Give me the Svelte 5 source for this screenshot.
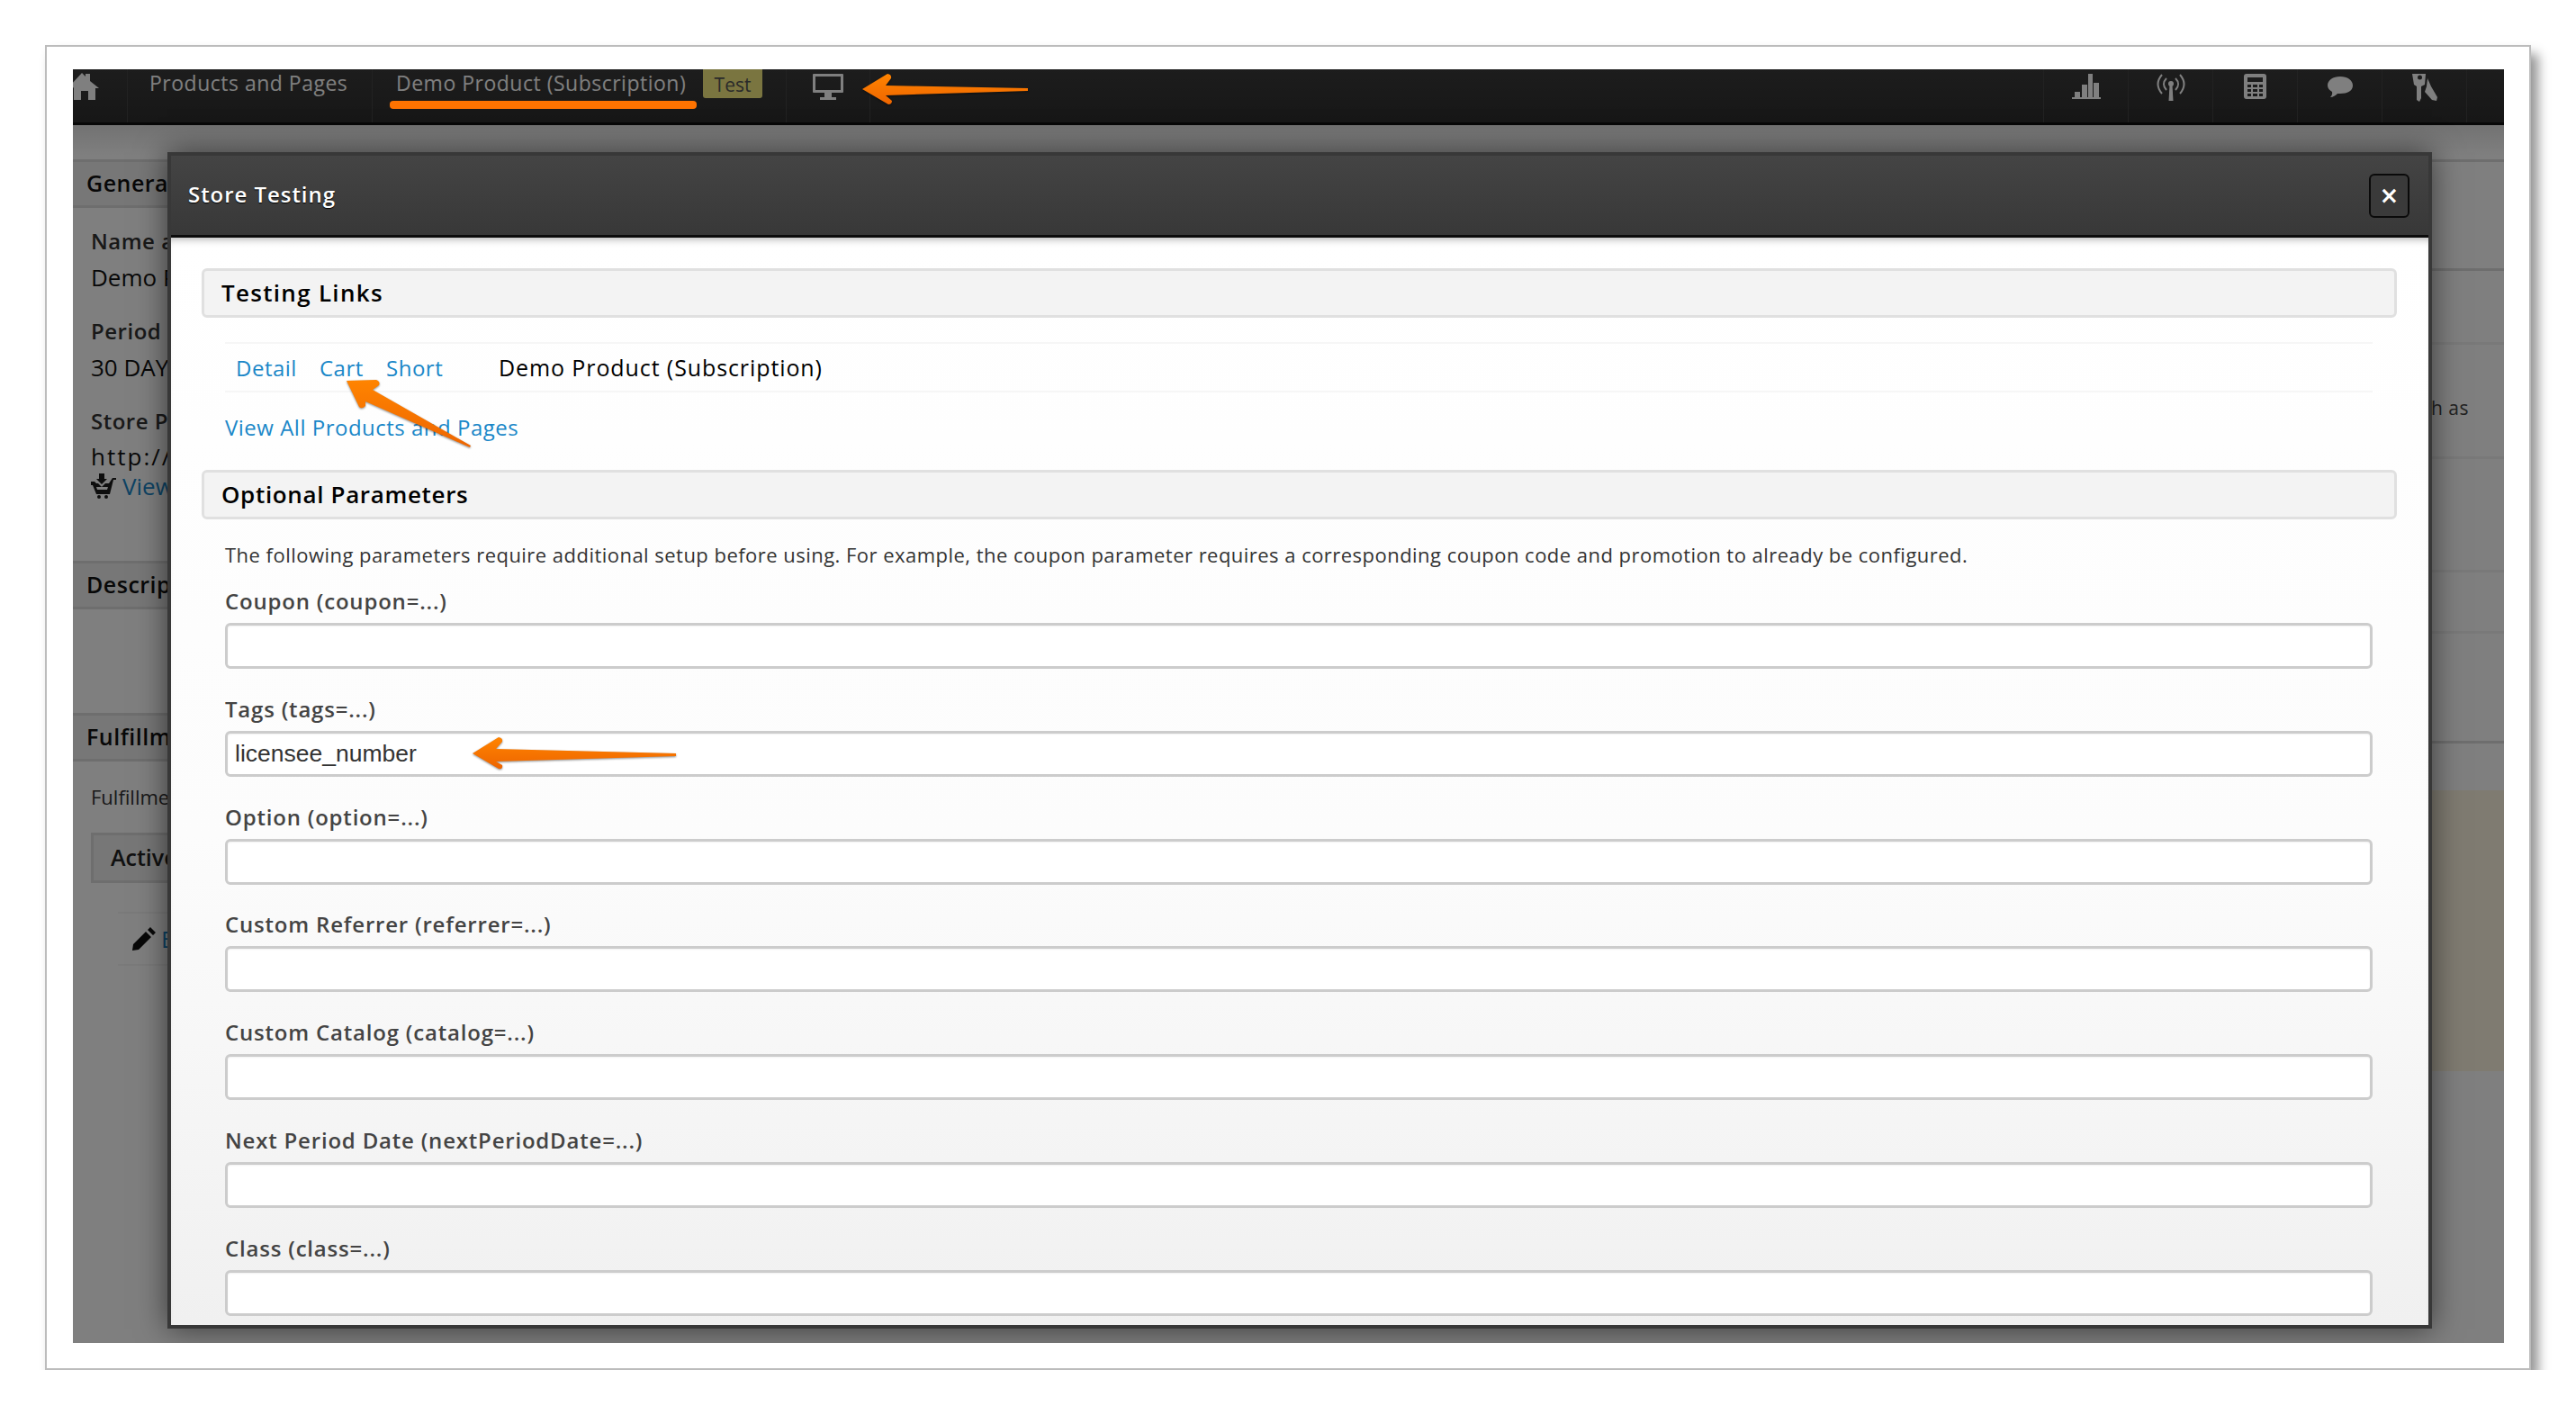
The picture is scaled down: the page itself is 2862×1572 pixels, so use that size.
<script>
	const fields = [
		{ label: 'Coupon (coupon=...)', value: '' },
		{ label: 'Tags (tags=...)', value: 'licensee_number' },
		{ label: 'Option (option=...)', value: '' },
		{ label: 'Custom Referrer (referrer=...)', value: '' },
		{ label: 'Custom Catalog (catalog=...)', value: '' },
		{ label: 'Next Period Date (nextPeriodDate=...)', value: '' },
		{ label: 'Class (class=...)', value: '' }
	];
</script>

<div class="frame">
	<div class="shot">
		<nav class="nav">
			<div class="home">
				<svg width="30" height="32" viewBox="0 0 30 32"><path d="M-2 14 L10 1 L14 5 L14 2 L19 2 L19 10 L29 18 L25 18 L25 31 L17 31 L17 21 L9 21 L9 31 L1 31 L1 18 Z" fill="#fff" /></svg>
			</div>
			<a class="crumb first">Products and Pages</a>
			<a class="crumb second">Demo Product (Subscription)</a>
			<span class="badge">Test</span>
			<div class="cell monitor">
				<svg width="34" height="30" viewBox="0 0 34 30"><path fill-rule="evenodd" d="M1 0 H33 a1 1 0 0 1 1 1 V20 a1 1 0 0 1 -1 1 H21 V26 H26 V29 H8 V26 H13 V21 H1 a1 1 0 0 1 -1 -1 V1 a1 1 0 0 1 1 -1 Z M3 3 V18 H31 V3 Z" fill="#fff" /></svg>
			</div>
			<div class="tools">
				<div class="cell">
					<svg width="32" height="28" viewBox="0 0 32 28"><path d="M0 26 H3 V20 H9 V26 H11 V12 H17 V26 H18 V0 H23 V26 H24 V10 H30 V26 H32 V28 H0 Z" fill="#fff" /></svg>
				</div>
				<div class="cell">
					<svg width="32" height="30" viewBox="0 0 32 30" fill="none" stroke="#fff" stroke-width="2"><path d="M6 1 C0 8 0 15 6 22 M26 1 C32 8 32 15 26 22 M11 5 C7 9 7 14 11 18 M21 5 C25 9 25 14 21 18" /><circle cx="16" cy="11" r="3" fill="#fff" stroke="none" /><path d="M14.5 13 H17.5 L18.5 30 H13.5 Z" fill="#fff" stroke="none" /></svg>
				</div>
				<div class="cell">
					<svg width="25" height="28" viewBox="0 0 25 28"><path fill-rule="evenodd" d="M3 0 H22 a3 3 0 0 1 3 3 V25 a3 3 0 0 1 -3 3 H3 a3 3 0 0 1 -3 -3 V3 a3 3 0 0 1 3 -3 Z M4 4 V9 H21 V4 Z M4 12 V15 H8 V12 Z M10 12 V15 H15 V12 Z M17 12 V15 H21 V12 Z M4 17 V20 H8 V17 Z M10 17 V20 H15 V17 Z M17 17 V20 H21 V17 Z M4 22 V25 H8 V22 Z M10 22 V25 H15 V22 Z M17 22 V25 H21 V22 Z" fill="#fff" /></svg>
				</div>
				<div class="cell chat">
					<svg width="28" height="24" viewBox="0 0 28 24"><path d="M14 0 C22 0 28 4 28 10 C28 16 22 19 14 19 L11 19 C9 21 6 23 3 23 C5 21 5.500 19 5 17 C2 15 0 13 0 10 C0 4 6 0 14 0 Z" fill="#fff" /></svg>
				</div>
				<div class="cell">
					<svg width="28" height="31" viewBox="0 0 28 31"><path fill-rule="evenodd" d="M0 0 H15 L14 12 L10 14 V27 L8 31 L5 29 V14 L2 12 Z M6 4 a2.500 2.500 0 1 0 5 0 a2.500 2.500 0 1 0 -5 0 Z" fill="#fff" /><path d="M17 5 L21 14 L28 26 L27 30 L22 29 L14 20 L16 14 Z" fill="#fff" /></svg>
				</div>
			</div>
		</nav>

		<div class="page">
			<div class="left">
				<h3 class="bar">General Information</h3>
				<div class="detail">
					<h4>Name and Display</h4>
					<p>Demo Product (Subscription)</p>
					<h4 class="period">Period</h4>
					<p>30 DAYS</p>
					<h4 class="store">Store Page</h4>
					<p class="url">http://store.example.com/demo</p>
					<p class="view">
						<svg width="28" height="28" viewBox="0 0 28 28"><path fill-rule="evenodd" d="M0 9 H4 L6 11 H8 L12 15 L16 11 H20 L24 5 H28 V7 H25 L21 23 H6 L2 13 H0 Z M7 26 a2 2 0 1 0 4 0 a2 2 0 1 0 -4 0 Z M15 26 a2 2 0 1 0 4 0 a2 2 0 1 0 -4 0 Z M9 0 H15 V6 H18 L12 12 L6 6 H9 Z M6 15 L7 18 H18 L19 15 Z" fill="#1d1d1d" /></svg>
						<a>View in Store</a>
					</p>
				</div>
				<h3 class="bar descr">Description</h3>
				<h3 class="bar fulfil">Fulfillment</h3>
				<p class="fulfil-note">Fulfillment actions</p>
				<div class="active-tab">Active</div>
				<div class="edit-row">
					<svg width="26" height="26" viewBox="0 0 26 26"><path d="M20 0 L26 6 L23 9 L17 3 Z M15 5 L21 11 L7 25 L0 26 L1 19 Z" fill="#111" /></svg>
					<a>Edit</a>
				</div>
			</div>
			<div class="right">
				<div class="rline one"></div>
				<div class="rline two"></div>
				<div class="rline three"><span>such as</span></div>
				<div class="rline four"></div>
				<div class="rline five"></div>
				<div class="rline six"></div>
				<div class="rline seven"></div>
				<div class="tan"></div>
			</div>
		</div>

		<div class="overlay"></div>

		<div class="modal">
			<header class="modal-head">
				<h2>Store Testing</h2>
				<button class="close">×</button>
			</header>
			<div class="modal-body">
				<h3 class="section">Testing Links</h3>
				<div class="links-row">
					<a class="l-detail">Detail</a>
					<a class="l-cart">Cart</a>
					<a class="l-short">Short</a>
					<span class="l-name">Demo Product (Subscription)</span>
				</div>
				<a class="view-all">View All Products and Pages</a>
				<h3 class="section optional">Optional Parameters</h3>
				<p class="note">The following parameters require additional setup before using. For example, the coupon parameter requires a corresponding coupon code and promotion to already be configured.</p>
				<div class="fields">
					{#each fields as field}
						<div class="field">
							<label>{field.label}</label>
							<input type="text" value={field.value} />
						</div>
					{/each}
				</div>
			</div>
		</div>
	</div>
</div>

<!-- the orange marks drawn on top of the screenshot -->
<svg class="marks" width="2862" height="1572" viewBox="0 0 2862 1572">
	<defs>
		<linearGradient id="org" x1="0" y1="0" x2="0" y2="1">
			<stop offset="0" stop-color="#ff8400" />
			<stop offset="1" stop-color="#ee6500" />
		</linearGradient>
	</defs>
	<rect x="433" y="112" width="341" height="9" rx="4" fill="#ff7300" />
	<path class="arrow" d="M958 99 L986 82 Q991 83 990 87 L984 95 L1142 98 L1142 101 L984 106 L991 112 Q991 116 987 116 Z" fill="url(#org)" />
	<path class="arrow" d="M525 837 L554 819 Q559 820 558 824 L551 832 L751 837 L751 840 L551 846 L558 850 Q559 855 554 854 Z" fill="url(#org)" />
	<path class="arrow" d="M385 423 L418 422 Q423 424 421 428 L414 433 L523 495 L522 497 L406 446 L406 451 Q402 455 399 452 Z" fill="url(#org)" />
</svg>

<style>
	:global(body) {
		margin: 0;
		background: #fff;
	}

	.frame {
		box-sizing: border-box;
		width: 2762px;
		height: 1472px;
		margin: 50px 0 0 50px;
		padding: 25px 28px 28px 29px;
		background: #fff;
		border: 2px solid #bcbcbc;
		box-shadow: 8px 10px 12px rgba(0, 0, 0, 0.42);
		font-family: "Open Sans", "Noto Sans", sans-serif;
	}

	.shot {
		position: relative;
		height: 100%;
		overflow: hidden;
		background: #fff;
	}

	.nav {
		position: relative;
		display: flex;
		height: 59px;
		padding: 0;
		background: linear-gradient(#3a3a3a, #2e2e2e);
		border-bottom: 3px solid #111;
		color: #fff;
	}

	.home {
		box-sizing: border-box;
		width: 61px;
		padding-top: 3px;
		border-right: 1px solid #444;
	}

	.home svg {
		display: block;
	}

	.crumb {
		box-sizing: border-box;
		padding-top: 1px;
		font-size: 23px;
		font-weight: 500;
		line-height: 28px;
		white-space: nowrap;
		letter-spacing: 0.5px;
		color: #fff;
	}

	.first {
		width: 272px;
		padding-left: 24px;
		border-right: 1px solid #444;
	}

	.second {
		width: 367px;
		padding-left: 26px;
	}

	.badge {
		box-sizing: border-box;
		width: 66px;
		height: 32px;
		border-radius: 0 0 3px 3px;
		background: #f4ea80;
		color: #555;
		font-size: 21px;
		line-height: 34px;
		text-align: center;
	}

	.monitor {
		margin-left: 26px;
		border-left: 1px solid #444;
		border-right: 1px solid #444;
	}

	.cell {
		box-sizing: border-box;
		width: 94px;
		padding-top: 5px;
		display: flex;
		justify-content: center;
		align-items: flex-start;
		border-right: 1px solid #444;
	}

	.cell svg {
		display: block;
	}

	.chat {
		padding-top: 8px;
	}

	.tools {
		display: flex;
		margin-left: auto;
		margin-right: 41px;
		border-left: 1px solid #444;
	}

	.page {
		position: relative;
		display: flex;
		justify-content: space-between;
		color: #222;
		font-size: 25px;
	}

	.left {
		width: 1400px;
		padding-top: 38px;
	}

	.bar {
		box-sizing: border-box;
		height: 54px;
		margin: 0;
		padding-left: 15px;
		background: #efefef;
		border-top: 3px solid #ddd;
		border-bottom: 3px solid #ddd;
		font-size: 25px;
		font-weight: 600;
		line-height: 46px;
		letter-spacing: 0.5px;
		color: #111;
	}

	.detail {
		box-sizing: border-box;
		height: 392px;
		padding: 20px 0 0 20px;
	}

	.detail h4 {
		margin: 0;
		font-size: 24px;
		font-weight: 600;
		line-height: 34px;
		letter-spacing: 0.5px;
		color: #333;
	}

	.detail p {
		margin: 6px 0 0;
		font-size: 26px;
		line-height: 34px;
		color: #111;
	}

	.detail .period,
	.detail .store {
		margin-top: 26px;
	}

	.detail .url {
		margin-top: 5px;
		letter-spacing: 2px;
	}

	.detail .view {
		display: flex;
		gap: 7px;
		margin: 0;
		align-items: center;
		height: 32px;
	}

	.view a,
	.edit-row a {
		color: #1a87c8;
		font-size: 26px;
	}

	.descr {
		margin-bottom: 115px;
	}

	.fulfil-note {
		margin: 25px 0 0 20px;
		font-size: 22px;
		line-height: 28px;
		color: #333;
	}

	.active-tab {
		box-sizing: border-box;
		height: 56px;
		width: 300px;
		margin: 26px 0 0 20px;
		padding-left: 19px;
		background: #efefef;
		border: 3px solid #ddd;
		font-size: 25px;
		font-weight: 600;
		line-height: 48px;
		color: #222;
	}

	.edit-row {
		display: flex;
		align-items: center;
		gap: 6px;
		width: 1200px;
		height: 56px;
		margin: 32px 0 0 50px;
		padding-left: 16px;
		border-top: 2px solid #f4f4f4;
		border-bottom: 2px solid #f4f4f4;
	}

	.right {
		position: relative;
		width: 400px;
	}

	.rline {
		height: 0;
		border-top: 3px solid #ddd;
	}

	.one {
		margin-top: 38px;
	}

	.two {
		margin-top: 118px;
	}

	.three {
		margin-top: 79px;
		border-top-color: #f2f2f2;
	}

	.three span {
		position: absolute;
		right: 39px;
		top: 300px;
		font-size: 21px;
		line-height: 28px;
		color: #444;
		letter-spacing: 0.5px;
	}

	.four {
		margin-top: 124px;
		border-top-color: #f2f2f2;
	}

	.five {
		margin-top: 123px;
		border-top-color: #f2f2f2;
	}

	.six {
		margin-top: 65px;
		border-top-color: #f2f2f2;
	}

	.seven {
		margin-top: 119px;
	}

	.tan {
		height: 312px;
		margin-top: 52px;
		background: #fef7e2;
	}

	.overlay {
		position: absolute;
		inset: 0;
		background: rgba(0, 0, 0, 0.5);
	}

	.overlay::before {
		content: "";
		position: absolute;
		left: 0;
		right: 0;
		top: 62px;
		height: 34px;
		background: linear-gradient(rgba(0, 0, 0, 0.1), rgba(0, 0, 0, 0));
	}

	.modal {
		position: absolute;
		left: 105px;
		top: 92px;
		box-sizing: border-box;
		width: 2516px;
		height: 1307px;
		border: 4px solid #383838;
		box-shadow: 0 0 32px rgba(0, 0, 0, 0.55);
		display: flex;
		flex-direction: column;
	}

	.modal-head {
		box-sizing: border-box;
		display: flex;
		align-items: center;
		justify-content: space-between;
		flex: none;
		height: 91px;
		padding: 0 21px 0 19px;
		background: linear-gradient(#444, #383838);
		border-bottom: 3px solid #0c0c0c;
	}

	.modal-head h2 {
		margin: 0 0 4px;
		color: #fff;
		font-size: 24px;
		font-weight: 600;
		letter-spacing: 0.95px;
		text-shadow: 0 1px 1px #000;
	}

	.close {
		box-sizing: border-box;
		width: 45px;
		height: 49px;
		padding: 0;
		background: #3a3a3a;
		border: 2px solid #0a0a0a;
		border-radius: 6px;
		color: #fff;
		font-family: "DejaVu Sans", sans-serif;
		font-size: 26px;
		font-weight: 700;
		line-height: 40px;
	}

	.modal-body {
		box-sizing: border-box;
		flex: 1;
		overflow: hidden;
		padding: 34px 35px 0 34px;
		background: linear-gradient(#fff, #fcfcfc 55%, #f0f0f0);
		box-shadow: inset 0 8px 8px -6px rgba(0, 0, 0, 0.3);
	}

	.section {
		box-sizing: border-box;
		height: 55px;
		margin: 0;
		padding-left: 19px;
		background: #f3f3f3;
		border: 3px solid #e0e0e0;
		border-radius: 6px;
		font-size: 26px;
		font-weight: 600;
		line-height: 49px;
		letter-spacing: 1.3px;
		color: #000;
	}

	.links-row {
		box-sizing: border-box;
		display: flex;
		align-items: center;
		height: 56px;
		margin: 27px 27px 0 26px;
		border-top: 2px solid #f6f6f6;
		border-bottom: 2px solid #f6f6f6;
		font-size: 24px;
		letter-spacing: 0.5px;
	}

	a {
		color: #1a87c8;
	}

	.l-detail {
		margin-left: 12px;
		width: 93px;
	}

	.l-cart {
		width: 74px;
	}

	.l-short {
		width: 125px;
	}

	.l-name {
		color: #000;
		font-size: 25px;
		letter-spacing: 0.9px;
	}

	.view-all {
		display: block;
		margin: 23px 0 0 26px;
		font-size: 24px;
		line-height: 32px;
		letter-spacing: 0.5px;
	}

	.optional {
		margin-top: 31px;
		letter-spacing: 0.65px;
	}

	.note {
		margin: 25px 0 0 26px;
		font-size: 22px;
		line-height: 28px;
		letter-spacing: 0.47px;
		color: #333;
	}

	.fields {
		margin: 24px 27px 0 26px;
	}

	.field {
		height: 119.83px;
	}

	label {
		display: block;
		height: 38px;
		font-size: 24px;
		font-weight: 600;
		line-height: 28px;
		letter-spacing: 0.8px;
		color: #444;
	}

	input {
		box-sizing: border-box;
		display: block;
		width: 100%;
		height: 51px;
		padding: 0 8px;
		background: #fff;
		border: 3px solid #ccc;
		border-radius: 6px;
		font-family: "Liberation Sans", Arial, sans-serif;
		font-size: 26.5px;
		color: #333;
		outline: none;
		box-shadow: inset 0 1px 2px rgba(0, 0, 0, 0.06);
	}

	.marks {
		position: absolute;
		left: 0;
		top: 0;
		pointer-events: none;
	}

	.arrow {
		filter: drop-shadow(0 1px 1px rgba(0, 0, 0, 0.45));
	}
</style>
